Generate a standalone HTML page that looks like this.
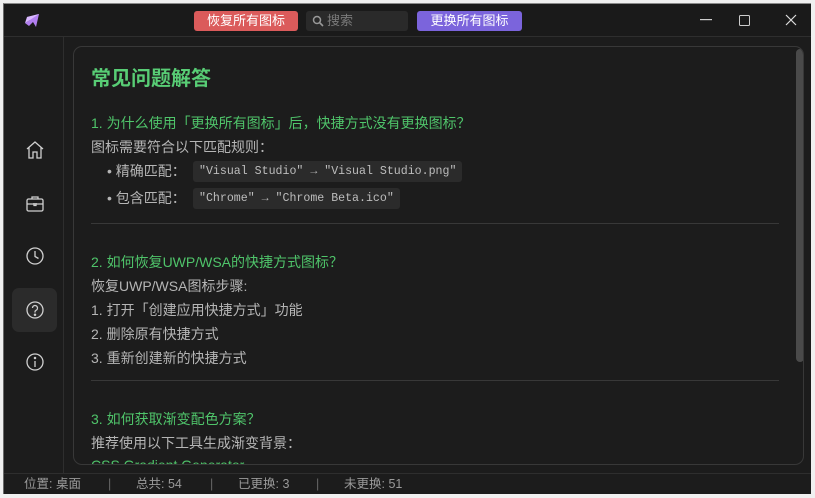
<!DOCTYPE html>
<html><head><meta charset="utf-8"><style>
*{margin:0;padding:0;box-sizing:border-box}
body{width:815px;height:498px;background:#f0f0f0;font-family:"Liberation Sans","Noto Sans CJK SC",sans-serif;overflow:hidden;position:relative}
.win{position:absolute;left:3px;top:3px;width:808px;height:491px;background:#1c1c1c;border-left:1px solid #6a6a6a;border-top:1px solid #8a8a8a;overflow:hidden}
.tb{position:absolute;left:0;top:0;right:0;height:33px;border-bottom:1px solid #2e2e2e;background:#1a1a1a}
.btn{position:absolute;top:7px;height:20px;border-radius:3px;color:#fff;font-size:13px;line-height:20px;text-align:center}
.side{position:absolute;left:0;top:33px;width:60px;bottom:21px;border-right:1px solid #2e2e2e}
.side svg{position:absolute;left:20px}
.card{position:absolute;left:69px;top:42px;width:731px;height:419px;border:1px solid #383838;border-radius:9px;overflow:hidden;background:#1c1c1c}
.card .in{position:absolute;left:17px;top:0;right:0}
.h1{position:absolute;top:15px;font-size:20px;font-weight:bold;color:#58cd75}
.q{position:absolute;font-size:14px;color:#4fc46a;white-space:nowrap}
.t{position:absolute;font-size:14px;color:#b5b5b5;white-space:nowrap}
.code{position:absolute;background:#2b2b2b;border-radius:3px;font-family:"Liberation Mono","Noto Sans CJK SC",monospace;font-size:11.6px;color:#bdbdbd;height:21px;line-height:21px;padding:0 6px;white-space:nowrap}
.hr{position:absolute;left:0;width:688px;height:1px;background:#383838}
.sb{position:absolute;left:722px;top:2px;width:8px;height:313px;background:#4a4a4a;border-radius:4px}
.st{position:absolute;left:0;right:0;bottom:0;height:21px;border-top:1px solid #2e2e2e;background:#1c1c1c;font-size:12.5px;color:#9a9a9a;line-height:20px}
.st span{position:absolute;top:0}
</style></head><body>
<div class="win">
 <div class="tb">
  <svg style="position:absolute;left:19px;top:9px" width="18" height="17" viewBox="0 0 18 17"><path d="M4 4 L16 1 L13 14 L10 9 L6 13 L2 10 L7 7 Z" fill="#b27ff0"/><path d="M16 1 L7 7 L2 10 L4 4Z" fill="#d9b8ff"/></svg>
  <div class="btn" style="left:190px;width:104px;background:#db5b5b">恢复所有图标</div>
  <div class="btn" style="left:302px;width:102px;background:#2a2a2a;color:#7a7a7a;text-align:left;padding-left:21px">搜索
   <svg style="position:absolute;left:6px;top:4px" width="12" height="12" viewBox="0 0 12 12"><circle cx="5" cy="5" r="3.5" fill="none" stroke="#999" stroke-width="1.5"/><path d="M7.5 7.5 L11 11" stroke="#999" stroke-width="1.6"/></svg></div>
  <div class="btn" style="left:413px;width:105px;background:#7b64dc">更换所有图标</div>
  <svg style="position:absolute;left:696px;top:15px" width="12" height="2"><rect width="12" height="1.2" fill="#ccc"/></svg>
  <svg style="position:absolute;left:735px;top:11px" width="11" height="11"><rect x=".5" y=".5" width="10" height="10" rx="1" fill="none" stroke="#ccc"/></svg>
  <svg style="position:absolute;left:781px;top:10px" width="12" height="12"><path d="M1 1L11 11M11 1L1 11" stroke="#ddd" stroke-width="1.2"/></svg>
 </div>
 <div class="side">
  <svg style="top:102px" width="22" height="22" viewBox="0 0 22 22" fill="none" stroke="#d0d0d0" stroke-width="1.3"><path d="M3 10 L11 3 L19 10 M5 8.5 V19 H9 V13 H13 V19 H17 V8.5"/></svg>
  <svg style="top:156px" width="22" height="22" viewBox="0 0 22 22" fill="none" stroke="#d0d0d0" stroke-width="1.3"><rect x="3" y="6" width="16" height="12" rx="1.5"/><path d="M8 6V4H14V6M3 11H19M10 10V12.5H12V10"/></svg>
  <svg style="top:208px" width="22" height="22" viewBox="0 0 22 22" fill="none" stroke="#d0d0d0" stroke-width="1.3"><circle cx="11" cy="11" r="8"/><path d="M11 6V11.5L14.5 13.5"/></svg>
  <div style="position:absolute;left:8px;top:251px;width:45px;height:44px;border-radius:7px;background:#2b2b2b"></div>
  <svg style="top:262px" width="22" height="22" viewBox="0 0 22 22" fill="none" stroke="#d0d0d0" stroke-width="1.3"><circle cx="11" cy="11" r="8"/><path d="M8.5 9a2.5 2.5 0 1 1 3.5 2.3c-.7.3-1 .8-1 1.5V13.5"/><circle cx="11" cy="15.8" r=".6" fill="#d0d0d0"/></svg>
  <svg style="top:314px" width="22" height="22" viewBox="0 0 22 22" fill="none" stroke="#d0d0d0" stroke-width="1.3"><circle cx="11" cy="11" r="8"/><path d="M11 10V16"/><circle cx="11" cy="7" r=".6" fill="#d0d0d0"/></svg>
 </div>
 <div class="card"><div class="in">
  <div class="h1">常见问题解答</div>
  <div class="q" style="top:66px">1. 为什么使用「更换所有图标」后，快捷方式没有更换图标？</div>
  <div class="t" style="top:90px">图标需要符合以下匹配规则：</div>
  <div class="t" style="top:114px;left:16px">• 精确匹配：</div>
  <div class="code" style="left:102px;top:114px">″Visual Studio″ → ″Visual Studio.png″</div>
  <div class="t" style="top:141px;left:16px">• 包含匹配：</div>
  <div class="code" style="left:102px;top:141px">″Chrome″ → ″Chrome Beta.ico″</div>
  <div class="hr" style="top:176px"></div>
  <div class="q" style="top:205px">2. 如何恢复UWP/WSA的快捷方式图标？</div>
  <div class="t" style="top:229px">恢复UWP/WSA图标步骤:</div>
  <div class="t" style="top:253px">1. 打开「创建应用快捷方式」功能</div>
  <div class="t" style="top:277px">2. 删除原有快捷方式</div>
  <div class="t" style="top:301px">3. 重新创建新的快捷方式</div>
  <div class="hr" style="top:333px"></div>
  <div class="q" style="top:362px">3. 如何获取渐变配色方案？</div>
  <div class="t" style="top:386px">推荐使用以下工具生成渐变背景：</div>
  <div class="q" style="top:410px">CSS Gradient Generator →</div>
 </div>
 <div class="sb"></div>
 </div>
 <div class="st">
  <span style="left:20px">位置: 桌面</span><span style="left:104px;color:#666">|</span>
  <span style="left:132px">总共: 54</span><span style="left:206px;color:#666">|</span>
  <span style="left:234px">已更换: 3</span><span style="left:312px;color:#666">|</span>
  <span style="left:340px">未更换: 51</span>
 </div>
</div>
</body></html>
